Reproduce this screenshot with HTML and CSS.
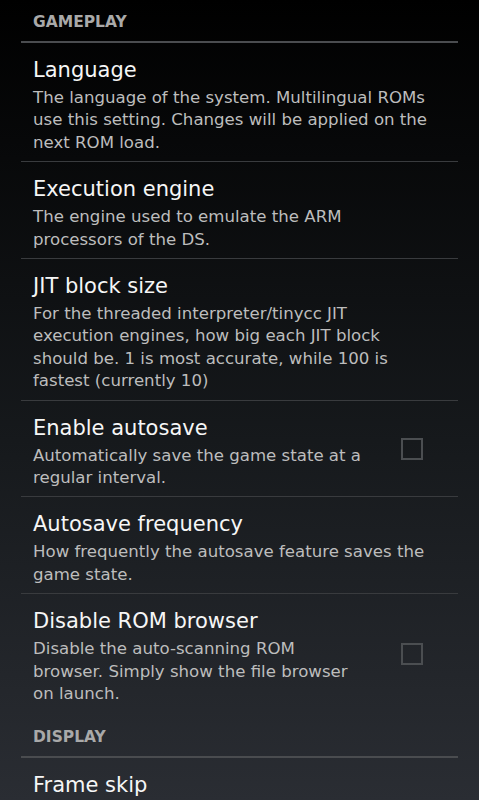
FILE: index.html
```html
<!DOCTYPE html>
<html>
<head>
  <title>Settings</title>
  <link rel="stylesheet" href="styles.css">
</head>
<body>
  <div class="prefs">
    <div class="category">GAMEPLAY</div>

    <div class="pref">
      <div class="pref-text">
        <div class="title">Language</div>
        <div class="summary">The language of the system. Multilingual ROMs<br>use this setting. Changes will be applied on the<br>next ROM load.</div>
      </div>
    </div>

    <div class="pref">
      <div class="pref-text">
        <div class="title">Execution engine</div>
        <div class="summary">The engine used to emulate the ARM<br>processors of the DS.</div>
      </div>
    </div>

    <div class="pref">
      <div class="pref-text">
        <div class="title">JIT block size</div>
        <div class="summary">For the threaded interpreter/tinycc JIT<br>execution engines, how big each JIT block<br>should be. 1 is most accurate, while 100 is<br>fastest (currently 10)</div>
      </div>
    </div>

    <div class="pref">
      <div class="pref-text">
        <div class="title">Enable autosave</div>
        <div class="summary">Automatically save the game state at a<br>regular interval.</div>
      </div>
      <span class="checkbox"></span>
    </div>

    <div class="pref">
      <div class="pref-text">
        <div class="title">Autosave frequency</div>
        <div class="summary">How frequently the autosave feature saves the<br>game state.</div>
      </div>
    </div>

    <div class="pref last">
      <div class="pref-text">
        <div class="title">Disable ROM browser</div>
        <div class="summary">Disable the auto-scanning ROM<br>browser. Simply show the file browser<br>on launch.</div>
      </div>
      <span class="checkbox"></span>
    </div>

    <div class="category spaced">DISPLAY</div>

    <div class="pref">
      <div class="pref-text">
        <div class="title">Frame skip</div>
      </div>
    </div>
  </div>
</body>
</html>
```

FILE: styles.css
```css
html, body {height: 100%;}
body {
  margin: 0;
  padding: 0 21px;
  overflow: hidden;
  font-family: "DejaVu Sans", sans-serif;
  background: linear-gradient(to bottom, #000 0%, #16191c 55%, #2a2d33 100%);
  color: #f4f4f4;
}

.category {
  font-size: 15.5px;
  font-weight: bold;
  line-height: 20px;
  color: #a9a9a9;
  padding: 12px 0 9px 12px;
  border-bottom: 2px solid #4a4c4f;
}
.category.spaced {margin-top: 2px;}

.pref {
  display: flex;
  align-items: center;
  padding: 14px 0 7px 12px;
  border-bottom: 1px solid #393b3e;
}
.pref.last {border-bottom: none;}

.pref-text {white-space: nowrap;}

.title {
  font-size: 21px;
  line-height: 26px;
  color: #f6f6f6;
}

.summary {
  margin-top: 4px;
  font-size: 16.6px;
  line-height: 22.4px;
  color: #bdbdbd;
}

.checkbox {
  width: 18px;
  height: 18px;
  border: 2px solid #4b4e51;
  margin: 0 35px 6px auto;
}
```
